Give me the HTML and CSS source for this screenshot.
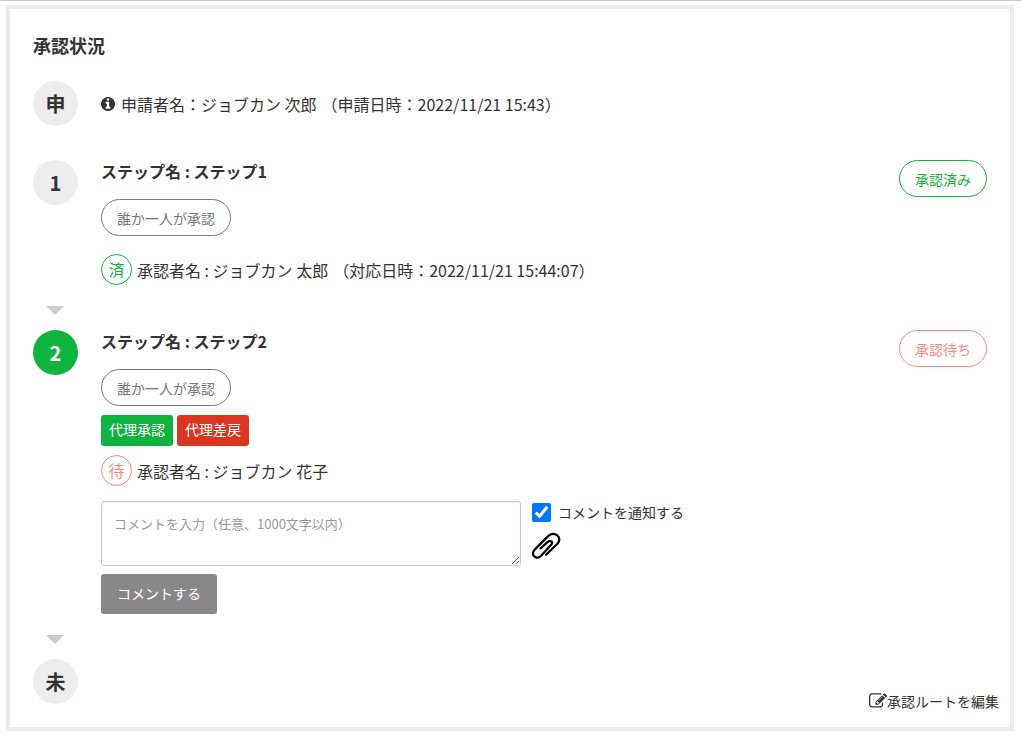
FILE: index.html
```html
<!DOCTYPE html>
<html lang="ja">
<head>
<meta charset="utf-8">
<meta name="viewport" content="width=device-width, initial-scale=1">
<title>承認状況</title>
<link rel="stylesheet" href="styles.css">
</head>
<body>
<main class="panel">
  <h1 class="panel-title">承認状況</h1>

  <section class="step step-request">
    <div class="marker">申</div>
    <p class="applicant">
      <svg class="icon-info" viewBox="128 128 1536 1536" aria-hidden="true"><path d="M1152 1376v-160q0-14-9-23t-23-9h-96v-512q0-14-9-23t-23-9h-320q-14 0-23 9t-9 23v160q0 14 9 23t23 9h96v320h-96q-14 0-23 9t-9 23v160q0 14 9 23t23 9h448q14 0 23-9t9-23zm-128-896v-160q0-14-9-23t-23-9h-192q-14 0-23 9t-9 23v160q0 14 9 23t23 9h192q14 0 23-9t9-23zm640 416q0 209-103 385.5t-279.5 279.5-385.5 103-385.5-103-279.5-279.5-103-385.5 103-385.5 279.5-279.5 385.5-103 385.5 103 279.5 279.5 103 385.5z"/></svg>
      <span>申請者名：ジョブカン 次郎</span>
      <span>（申請日時：2022/11/21 15:43）</span>
    </p>
  </section>

  <section class="step">
    <div class="marker">1</div>
    <div class="step-body">
      <h2 class="step-name">ステップ名 : ステップ1</h2>
      <span class="badge badge-rule">誰か一人が承認</span>
      <p class="approver approver-done">
        <span class="state state-done">済</span>
        <span>承認者名 : ジョブカン 太郎</span>
        <span>（対応日時：2022/11/21 15:44:07）</span>
      </p>
    </div>
    <span class="badge badge-done">承認済み</span>
  </section>

  <div class="arrow"></div>

  <section class="step">
    <div class="marker marker-current">2</div>
    <div class="step-body">
      <h2 class="step-name">ステップ名 : ステップ2</h2>
      <span class="badge badge-rule">誰か一人が承認</span>
      <div class="proxy-actions">
        <button class="btn btn-approve" type="button">代理承認</button>
        <button class="btn btn-reject" type="button">代理差戻</button>
      </div>
      <p class="approver">
        <span class="state state-wait">待</span>
        <span>承認者名 : ジョブカン 花子</span>
      </p>
      <form class="comment">
        <div class="comment-row">
          <textarea class="comment-text" aria-label="コメント" placeholder="コメントを入力（任意、1000文字以内）"></textarea>
          <div class="comment-options">
            <label class="notify"><input class="notify-check" type="checkbox" checked>コメントを通知する</label>
            <button class="attach" type="button" aria-label="ファイルを添付">
              <svg class="icon-clip" viewBox="0 0 30 30" aria-hidden="true"><path d="M9 17 16 10.500C19 8 22.500 10.500 20 13L9.500 24.500C4.500 29.500 -2 23.500 2.500 18.500L17 4C23 -1.500 32 5.500 26.500 12L14.500 23.500"/></svg>
            </button>
          </div>
        </div>
        <button class="btn btn-comment" type="button">コメントする</button>
      </form>
    </div>
    <span class="badge badge-wait">承認待ち</span>
  </section>

  <div class="arrow"></div>

  <section class="step step-last">
    <div class="marker">未</div>
    <a class="edit-route" href="#"><svg class="icon-edit" viewBox="0 128 1792 1536" aria-hidden="true"><path d="M888 1184l116-116-152-152-116 116v56h96v96h56zm440-720q-16-16-33 1l-350 350q-17 17-1 33t33-1l350-350q17-17 1-33zm80 594v190q0 119-84.5 203.5t-203.5 84.5h-832q-119 0-203.5-84.5t-84.5-203.5v-832q0-119 84.5-203.5t203.5-84.5h832q63 0 117 25 15 7 18 23 3 17-9 29l-49 49q-14 14-32 8-23-6-45-6h-832q-66 0-113 47t-47 113v832q0 66 47 113t113 47h832q66 0 113-47t47-113v-126q0-13 9-22l64-64q15-15 35-7t20 29zm-96-738l288 288-672 672h-288v-288zm444 132l-92 92-288-288 92-92q28-28 68-28t68 28l152 152q28 28 28 68t-28 68z"/></svg>承認ルートを編集</a>
  </section>
</main>
</body>
</html>
```

FILE: styles.css
```css
* {
  box-sizing: border-box;
}

body {
  margin: 0;
  padding: 4px 7px 5px 6px;
  border-top: 1px solid #ccc;
  background: #fff;
  color: #333;
  font: 16px/24px "Noto Sans CJK JP", sans-serif;
}

h1,
h2,
p {
  margin: 0;
}

button,
textarea {
  font-family: inherit;
}

.panel {
  padding: 24px 23px 23px;
  border: 4px solid #ededed;
}

.panel-title {
  margin-bottom: 24px;
  font-size: 18px;
  line-height: 24px;
}

.step {
  display: flex;
  align-items: flex-start;
}

.step-request {
  align-items: center;
  margin-bottom: 34px;
}

.marker {
  flex: none;
  width: 45px;
  height: 45px;
  margin-right: 23px;
  border-radius: 50%;
  background: #ededed;
  font-size: 20px;
  font-weight: bold;
  line-height: 45px;
  text-align: center;
}

.marker-current {
  background: #0fb43f;
  color: #fff;
}

.applicant,
.approver {
  display: flex;
  flex-wrap: wrap;
  align-items: center;
  column-gap: 5px;
}

.applicant {
  line-height: 22px;
}

.icon-info {
  width: 14px;
  height: 14px;
  margin-right: 1px;
  fill: #333;
}

.step-body {
  flex: 1;
}

.step-name {
  margin-bottom: 17px;
  font-size: 16px;
  line-height: 22px;
}

.badge {
  display: block;
  flex: none;
  width: max-content;
  padding: 1px 15px 0;
  border: 1px solid;
  border-radius: 19px;
  font-size: 14px;
  line-height: 34px;
}

.badge-rule {
  color: #777;
}

.badge-done {
  color: #0fb43f;
}

.badge-wait {
  color: #ff877f;
}

.approver-done {
  margin-top: 18px;
}

.state {
  width: 31px;
  height: 31px;
  border: 1px solid;
  border-radius: 50%;
  line-height: 29px;
  text-align: center;
}

.state-done {
  color: #0fb43f;
}

.state-wait {
  color: #ff877f;
}

.arrow {
  width: 18px;
  margin: 21px 0 15px 13px;
  border: 9px solid transparent;
  border-top-color: #ccc;
  border-bottom: 0;
}

.proxy-actions {
  display: flex;
  gap: 4px;
  margin: 9px 0;
}

.btn {
  border: 0;
  border-radius: 3px;
  color: #fff;
  font-size: 14px;
}

.btn-approve,
.btn-reject {
  height: 31px;
  padding: 0 8px 3px;
}

.btn-approve {
  background: #0fb43f;
}

.btn-reject {
  background: #dc3522;
}

.comment {
  margin-top: 15px;
}

.comment-row {
  display: flex;
  gap: 11px;
  margin-bottom: 8px;
}

.comment-text {
  width: 420px;
  height: 65px;
  padding: 12px;
  border: 1px solid #ccc;
  border-radius: 3px;
  box-shadow: inset 0 1px 1px #eee;
  font-size: 13px;
  line-height: 20px;
}

.comment-text::placeholder {
  color: #999;
}

.notify {
  display: flex;
  align-items: center;
  gap: 7px;
  font-size: 14px;
  line-height: 22px;
}

.notify-check {
  width: 19px;
  height: 19px;
  margin: 0;
}

.attach {
  display: block;
  margin-top: 9px;
  padding: 0;
  border: 0;
  background: none;
}

.icon-clip {
  display: block;
  width: 29px;
  height: 29px;
  fill: none;
  stroke: #000;
  stroke-width: 2.3;
  stroke-linecap: round;
}

.btn-comment {
  height: 40px;
  padding: 0 16px 2px;
  background: #888;
}

.step-last {
  justify-content: space-between;
}

.edit-route {
  display: flex;
  align-items: center;
  align-self: flex-end;
  margin-right: -12px;
  margin-bottom: -8px;
  color: #333;
  font-size: 14px;
  line-height: 22px;
  text-decoration: none;
}

.icon-edit {
  width: 18px;
  height: 16px;
  fill: #333;
}
```
